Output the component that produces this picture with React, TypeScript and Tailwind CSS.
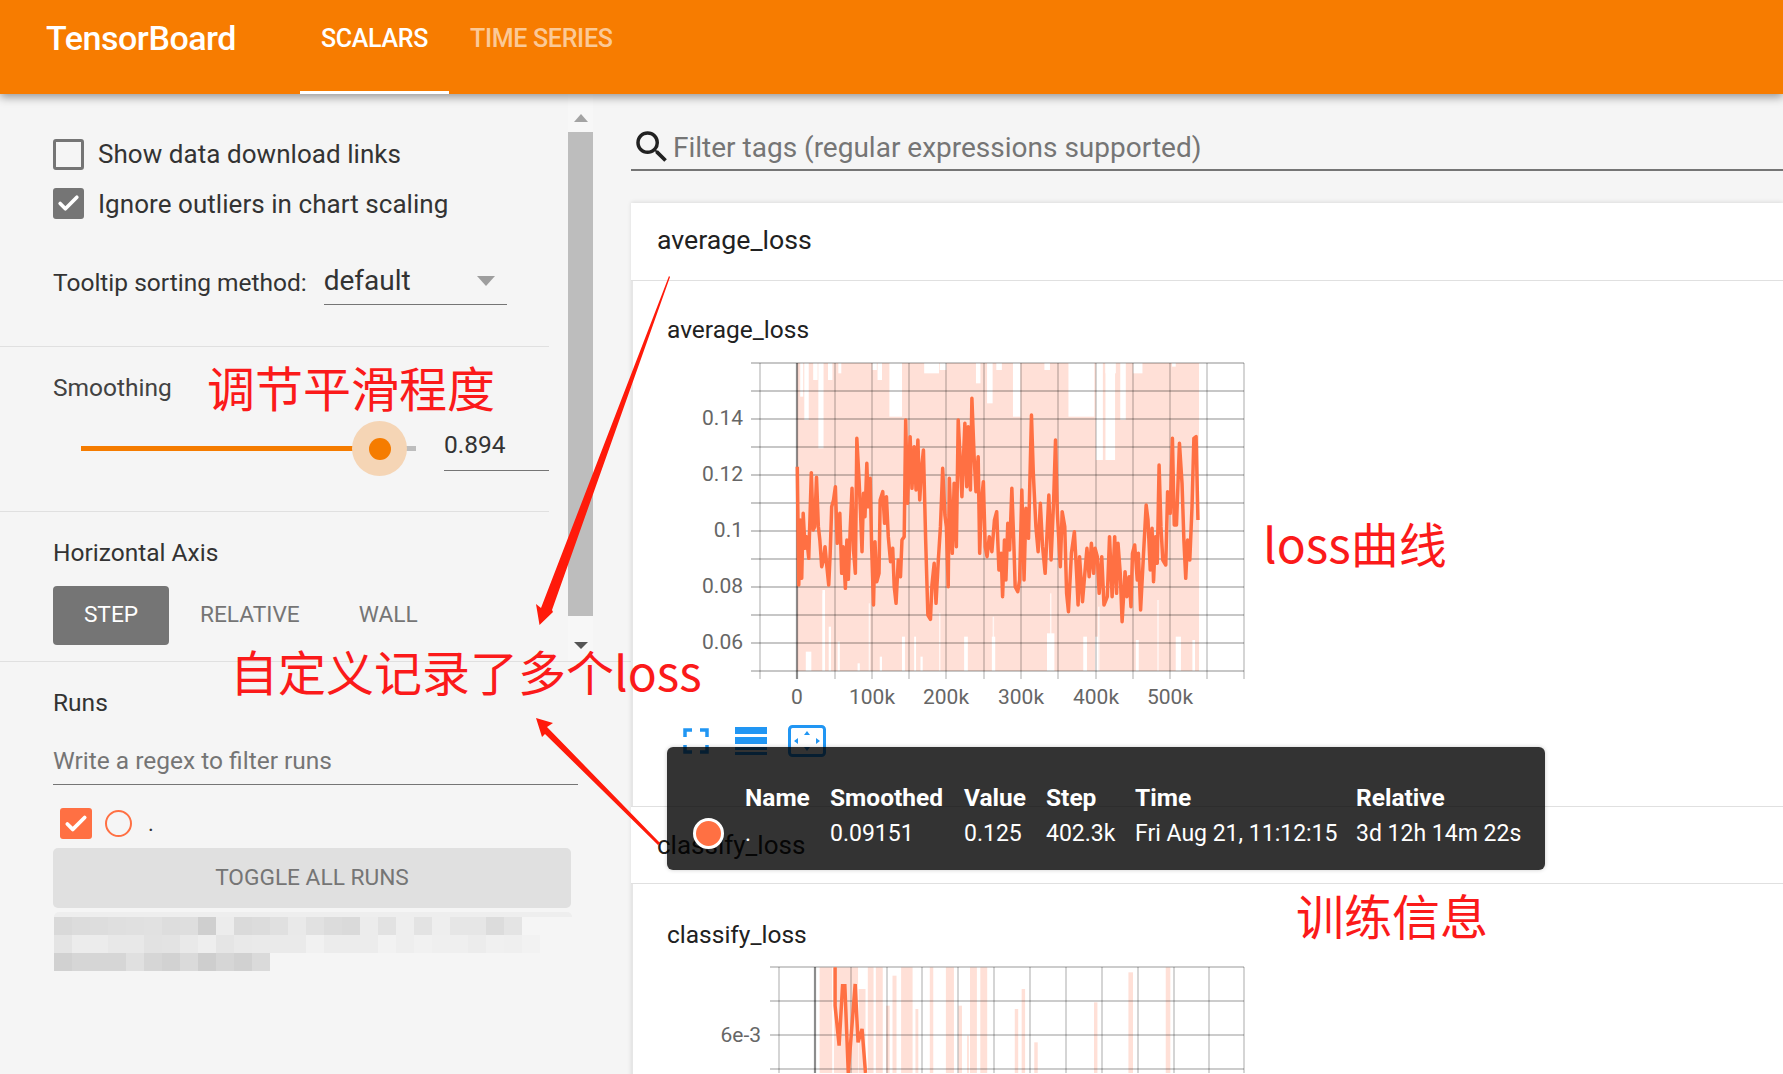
import { Check } from 'lucide-react'

const zx = (x: number) => 680 + x / 2.703
const zy = (y: number) => 340 + y / 3

const smoothed = [[317,380],[321,735],[325,540],[329,715],[333,520],[338,625],[342,590],[348,655],[355,398],[360,570],[364,560],[369,412],[374,560],[378,600],[383,680],[388,660],[392,620],[397,680],[402,735],[406,640],[410,500],[415,480],[420,440],[425,610],[432,520],[437,700],[441,620],[447,745],[451,600],[455,718],[460,570],[465,445],[469,630],[474,700],[478,295],[484,420],[488,520],[492,635],[496,460],[500,530],[505,370],[509,500],[514,415],[518,620],[523,795],[527,605],[532,725],[538,700],[541,480],[548,455],[553,550],[558,470],[563,590],[569,665],[575,625],[579,740],[584,790],[590,660],[596,710],[600,600],[606,590],[610,240],[615,490],[622,290],[627,445],[633,320],[638,450],[643,300],[648,480],[653,385],[658,330],[664,600],[670,825],[677,838],[681,735],[687,670],[692,790],[698,665],[704,560],[710,385],[716,525],[720,560],[725,740],[728,415],[736,640],[741,430],[747,620],[752,240],[757,350],[762,470],[770,250],[775,440],[779,260],[785,450],[789,175],[795,350],[800,455],[806,350],[810,640],[815,480],[820,425],[825,620],[830,650],[836,590],[843,635],[850,540],[856,515],[862,690],[868,640],[872,770],[877,600],[881,720],[886,550],[891,630],[897,445],[902,600],[906,740],[913,755],[918,720],[924,450],[930,720],[935,505],[942,595],[950,225],[955,400],[962,560],[968,635],[974,490],[980,620],[987,700],[997,465],[1003,660],[1010,480],[1015,300],[1020,520],[1028,680],[1033,515],[1040,560],[1045,760],[1050,815],[1058,640],[1066,575],[1072,700],[1076,795],[1080,650],[1088,785],[1095,690],[1100,625],[1106,710],[1112,610],[1118,700],[1122,625],[1128,650],[1133,760],[1140,650],[1146,795],[1155,770],[1161,590],[1168,770],[1175,590],[1180,760],[1184,610],[1190,700],[1195,845],[1203,695],[1208,770],[1214,710],[1219,800],[1223,640],[1229,615],[1236,720],[1239,640],[1245,810],[1253,640],[1260,495],[1265,540],[1271,690],[1276,565],[1280,725],[1285,590],[1290,670],[1295,375],[1300,560],[1305,660],[1313,675],[1318,455],[1325,520],[1331,295],[1336,555],[1342,555],[1350,310],[1357,430],[1362,600],[1367,715],[1372,600],[1378,660],[1384,500],[1389,295],[1395,290],[1400,540]]

// white gaps in the raw series band, zoomed coords [x1, x2, y]
const topGaps = [[325,333,170],[336,348,240],[360,372,120],[374,388,325],[400,412,120],[428,436,100],[520,532,90],[534,546,120],[566,600,230],[660,700,100],[702,720,90],[800,812,130],[830,845,190],[855,870,90],[900,920,230],[985,1000,90],[1050,1120,230],[1124,1143,360],[1150,1178,100],[1150,1176,360],[1190,1205,240],[1225,1250,100],[1330,1340,80]]
const bottomGaps = [[340,355,935],[385,392,750],[402,408,860],[426,432,905],[480,486,970],[540,546,950],[600,608,890],[633,638,890],[650,656,950],[768,778,890],[843,852,890],[992,1012,880],[1090,1100,890],[1122,1130,890],[1232,1240,900],[1340,1354,890],[1385,1392,900]]
const lightLines = [[385,760],[510,790],[700,820],[845,830],[1000,760],[1130,800],[1290,780]]

const chart1V = [760, 835, 872, 909, 946, 984, 1021, 1058, 1096, 1133, 1170, 1207, 1244]
const chart1H = [363, 391, 419, 447, 475, 503, 531, 559, 587, 615, 643, 671]
const chart1Y = [['0.14', 419], ['0.12', 475], ['0.1', 531], ['0.08', 587], ['0.06', 643]] as const
const chart1X = [['0', 797], ['100k', 872], ['200k', 946], ['300k', 1021], ['400k', 1096], ['500k', 1170]] as const

const chart2V = [779, 851, 887, 922, 958, 994, 1030, 1066, 1102, 1138, 1174, 1209, 1244]
const chart2Pink = [[278,300,775],[303,345,775],[346,358,840],[362,372,775],[376,388,775],[394,400,890],[405,412,800],[420,440,775],[445,450,900],[470,476,775],[498,512,775],[520,526,890],[535,538,980],[540,552,775],[558,570,775],[618,624,900],[630,636,840],[652,658,1000],[756,762,880],[816,824,790],[881,889,775]]
const chart2Line = [[305,775],[305,890],[312,1010],[318,830],[322,830],[328,1092],[340,825],[345,1000],[352,960],[358,1092]]

const blurRows = [
  ['#d9d9d9','#dcdcdc','#dddddd','#dfdfdf','#e0e0e0','#e1e1e1','#dddddd','#dedede','#cfcfcf','#ececec','#dadada','#dcdcdc','#e0e0e0','#e9e9e9','#e1e1e1','#dcdcdc','#dadada','#ececec','#e2e2e2','#eeeeee','#e3e3e3','#eeeeee','#e6e6e6','#e6e6e6','#dcdcdc','#e4e4e4'],
  ['#e4e4e4','#ececec','#ececec','#e8e8e8','#e8e8e8','#e2e2e2','#e3e3e3','#e9e9e9','#eeeeee','#e5e5e5','#e9e9e9','#eaeaea','#eaeaea','#eaeaea','#f1f1f1','#ececec','#ececec','#ececec','#f2f2f2','#eeeeee','#f1f1f1','#efefef','#efefef','#ececec','#f0f0f0','#efefef','#f2f2f2'],
  ['#d1d1d1','#d6d6d6','#d6d6d6','#d6d6d6','#e0e0e0','#d6d6d6','#d2d2d2','#dadada','#cecece','#d6d6d6','#d1d1d1','#dadada'],
]

function Chart1() {
  return (
    <svg className="block w-[550px] h-[365px]" viewBox="700 350 550 365">
      <rect x={zx(317)} y={363} width={zx(1403) - zx(317)} height={308} fill="#ffe0d7" />
      {topGaps.map(([a, b, y]) => (
        <rect key={`t${a}-${y}`} x={zx(a)} y={363} width={zx(b) - zx(a)} height={zy(y) - 363} fill="#fff" />
      ))}
      {bottomGaps.map(([a, b, y]) => (
        <rect key={`b${a}-${y}`} x={zx(a)} y={zy(y)} width={zx(b) - zx(a)} height={671 - zy(y)} fill="#fff" />
      ))}
      {lightLines.map(([x, y]) => (
        <rect key={`l${x}`} x={zx(x)} y={zy(y)} width={1.5} height={671 - zy(y)} fill="#fff" opacity={0.7} />
      ))}
      {chart1H.map((y) => (
        <line key={y} x1={751} x2={1244} y1={y} y2={y} stroke="#000" strokeOpacity={0.22} strokeWidth={2} />
      ))}
      {chart1V.map((x) => (
        <line key={x} x1={x} x2={x} y1={363} y2={679} stroke="#000" strokeOpacity={0.22} strokeWidth={1.5} />
      ))}
      <line x1={797} x2={797} y1={363} y2={679} stroke="#000" strokeOpacity={0.45} strokeWidth={2.2} />
      <polyline
        points={smoothed.map(([x, y]) => `${zx(x)},${zy(y)}`).join(' ')}
        fill="none"
        stroke="#ff7043"
        strokeWidth={3.5}
        strokeLinejoin="round"
      />
      {chart1Y.map(([t, y]) => (
        <text key={t} x={743} y={y + 6} textAnchor="end" fill="#666" fontSize="21">{t}</text>
      ))}
      {chart1X.map(([t, x]) => (
        <text key={t} x={x} y={704} textAnchor="middle" fill="#666" fontSize="21">{t}</text>
      ))}
    </svg>
  )
}

function Chart2() {
  const px = (x: number) => 660 + x / 1.742
  const py = (y: number) => 710 + y / 3
  return (
    <svg className="block w-[550px] h-[110px]" viewBox="700 964 550 110">
      {chart2Pink.map(([a, b, y]) => (
        <rect key={a} x={px(a)} y={py(y)} width={px(b) - px(a)} height={1074 - py(y)} fill="#ffe0d7" />
      ))}
      {[968, 1002, 1036, 1070].map((y) => (
        <line key={y} x1={770} x2={1244} y1={y} y2={y} stroke="#000" strokeOpacity={0.2} strokeWidth={2} />
      ))}
      {chart2V.map((x) => (
        <line key={x} x1={x} x2={x} y1={968} y2={1074} stroke="#000" strokeOpacity={0.22} strokeWidth={1.5} />
      ))}
      <line x1={815} x2={815} y1={968} y2={1074} stroke="#000" strokeOpacity={0.45} strokeWidth={2.2} />
      <polyline
        points={chart2Line.map(([x, y]) => `${px(x)},${py(y)}`).join(' ')}
        fill="none"
        stroke="#ff7043"
        strokeWidth={3.5}
      />
      <text x={761} y={1043} textAnchor="end" fill="#666" fontSize="21">6e-3</text>
    </svg>
  )
}

function ChartIcons() {
  return (
    <div className="flex items-center h-[34px] ml-[16px] mt-[9px]">
      <svg width="26" height="26" viewBox="0 0 26 26" fill="none" stroke="#2196f3" strokeWidth="3.5">
        <path d="M2 9V2h7M17 2h7v7M2 17v7h7M24 17v7h-7" />
      </svg>
      <svg className="ml-[26px]" width="32" height="28" viewBox="0 0 32 28" fill="#2196f3">
        <rect width="32" height="7" />
        <rect y="10" width="32" height="7" />
        <rect y="20" width="32" height="3" />
        <rect y="25" width="32" height="3" />
      </svg>
      <svg className="ml-[21px]" width="38" height="32" viewBox="0 0 38 32" fill="#2196f3">
        <rect x="1.5" y="1.5" width="35" height="29" rx="3" fill="none" stroke="#2196f3" strokeWidth="3" />
        <path d="M19 6l3 4h-6zM19 26l3-4h-6zM6 16l4-3v6zM32 16l-4-3v6z" />
      </svg>
    </div>
  )
}

function Tooltip() {
  return (
    <div className="absolute z-10 left-[36px] top-[653px] w-[878px] h-[123px] rounded-[6px] bg-black/80 shadow-[0_0_4px_rgba(0,0,0,0.2)] text-white text-[23px] leading-[28px] pt-[37px]">
      <div className="grid grid-cols-[78px_85px_134px_82px_89px_221px_1fr] items-center font-bold text-[24.5px]">
        <div />
        <div>Name</div>
        <div>Smoothed</div>
        <div>Value</div>
        <div>Step</div>
        <div>Time</div>
        <div>Relative</div>
      </div>
      <div className="grid grid-cols-[78px_85px_134px_82px_89px_221px_1fr] items-center mt-[6px]">
        <div className="pl-[26px]">
          <div className="w-[31px] h-[31px] rounded-full bg-[#ff7043] border-[3px] border-white" />
        </div>
        <div>.</div>
        <div>0.09151</div>
        <div>0.125</div>
        <div>402.3k</div>
        <div className="whitespace-nowrap">Fri Aug 21, 11:12:15</div>
        <div className="whitespace-nowrap">3d 12h 14m 22s</div>
      </div>
    </div>
  )
}

function Annotations() {
  return (
    <>
      <svg className="absolute inset-0 w-full h-full pointer-events-none" viewBox="0 0 1783 1074">
        <path d="M669 276L670 277L552 610L553 612L539.5 625L536 604L541 608Z" fill="#ff1a0a" />
        <path d="M536 718L553 723L547 727L660 843L658 845L545 734L542 737Z" fill="#ff1a0a" />
      </svg>
      <div className="absolute left-[207px] top-[362px] text-[48px] leading-[48px] text-[#fb1a1a] [font-family:'Noto_Sans_CJK_SC',sans-serif] whitespace-nowrap">调节平滑程度</div>
      <div className="absolute left-[230px] top-[646px] text-[48px] leading-[48px] text-[#fb1a1a] [font-family:'Noto_Sans_CJK_SC',sans-serif] whitespace-nowrap">自定义记录了多个loss</div>
      <div className="absolute left-[1263px] top-[518px] text-[48px] leading-[48px] text-[#fb1a1a] [font-family:'Noto_Sans_CJK_SC',sans-serif] whitespace-nowrap">loss曲线</div>
      <div className="absolute left-[1296px] top-[890px] text-[48px] leading-[48px] text-[#fb1a1a] [font-family:'Noto_Sans_CJK_SC',sans-serif] whitespace-nowrap">训练信息</div>
    </>
  )
}

function Sidebar() {
  return (
    <aside className="w-[631px] shrink-0 text-[#333]">
      <div className="flex h-[568px] border-b border-[#e0e0e0]">
        <div className="w-[549px] shrink-0">
          <div className="h-[253px] border-b border-[#e0e0e0] pl-[53px] pt-[45px]">
            <div className="flex items-center h-[31px]">
              <div className="w-[31px] h-[31px] rounded-[3px] border-[3px] border-[#757575]" />
              <span className="ml-[14px] mt-[-2px] text-[26px] leading-none tracking-[0.05px]">Show data download links</span>
            </div>
            <div className="flex items-center h-[31px] mt-[18px]">
              <div className="w-[31px] h-[31px] rounded-[3px] bg-[#757575] flex items-center justify-center">
                <Check size={25} color="#fff" strokeWidth={3.5} />
              </div>
              <span className="ml-[14px] text-[26px] leading-none tracking-[0.05px]">Ignore outliers in chart scaling</span>
            </div>
            <div className="flex items-start mt-[44px]">
              <span className="text-[24.5px] leading-[40px] whitespace-nowrap">Tooltip sorting method:</span>
              <div className="ml-[17px] w-[183px] h-[42px] border-b border-[#757575] flex items-start justify-between pr-[12px]">
                <span className="text-[28px] leading-[36px]">default</span>
                <div className="mt-[13px] w-0 h-0 border-x-[9px] border-x-transparent border-t-[10px] border-t-[#9e9e9e]" />
              </div>
            </div>
          </div>
          <div className="h-[165px] border-b border-[#e0e0e0] pl-[53px] pt-[26px]">
            <div className="text-[24.5px] leading-[30px] text-[#424242]">Smoothing</div>
            <div className="flex items-start">
              <div className="relative w-[335px] h-[5px] ml-[28px] mt-[43px] bg-[#bdbdbd]">
                <div className="h-full w-[299px] bg-[#f57c00]" />
                <div className="absolute left-[271px] top-[-25px] w-[55px] h-[55px] rounded-full bg-[#f5d5b5] flex items-center justify-center">
                  <div className="w-[22px] h-[22px] rounded-full bg-[#f57c00]" />
                </div>
              </div>
              <div className="ml-[28px] mt-[14px] pt-[6px] w-[105px] h-[54px] border-b border-[#757575] text-[24.5px] leading-[44px]">0.894</div>
            </div>
          </div>
          <div className="pl-[53px] pt-[26px]">
            <div className="text-[24.5px] leading-[30px]">Horizontal Axis</div>
            <div className="flex items-center mt-[18px] text-[22.7px] text-[#757575]">
              <div className="w-[116px] h-[59px] rounded-[4px] bg-[#757575] text-white flex items-center justify-center">STEP</div>
              <span className="ml-[31px]">RELATIVE</span>
              <span className="ml-[59px]">WALL</span>
            </div>
          </div>
        </div>
        <div className="ml-[19px] w-[25px] flex flex-col items-center bg-[#f7f7f7]">
          <div className="h-[38px] w-full flex justify-center pt-[20px]">
            <div className="w-0 h-0 border-x-[7px] border-x-transparent border-b-[8px] border-b-[#a3a3a3]" />
          </div>
          <div className="w-full h-[484px] bg-[#bdbdbd]" />
          <div className="mt-[26px] w-0 h-0 border-x-[7px] border-x-transparent border-t-[7px] border-t-[#555]" />
        </div>
      </div>
      <div className="pl-[53px] pt-[26px]">
        <div className="text-[24.5px] leading-[30px]">Runs</div>
        <div className="mt-[24px] w-[525px] h-[43px] border-b border-[#757575] text-[24.5px] leading-[38px] text-[#757575]">Write a regex to filter runs</div>
        <div className="flex items-center ml-[7px] mt-[23px]">
          <div className="w-[32px] h-[31px] rounded-[3px] bg-[#ff7043] flex items-center justify-center">
            <Check size={26} color="#fff" strokeWidth={3.5} />
          </div>
          <div className="ml-[13px] w-[27px] h-[27px] rounded-full border-2 border-[#ff7043]" />
          <span className="ml-[16px] text-[22px] leading-none">.</span>
        </div>
        <div className="mt-[9px] w-[518px] h-[60px] rounded-[5px] bg-[#e0e0e0] flex items-center justify-center text-[22.7px] text-[#757575]">TOGGLE ALL RUNS</div>
        <div className="mt-[4px] ml-[1px] w-[518px] h-[5px] rounded-t-full bg-[#eeeeee]" />
        <div className="ml-[1px]">
          {blurRows.map((row, i) => (
            <div key={i} className="flex">
              {row.map((c, j) => (
                <div key={j} className="w-[18px] h-[18px]" style={{ backgroundColor: c }} />
              ))}
            </div>
          ))}
        </div>
      </div>
    </aside>
  )
}

export default function App() {
  return (
    <div className="relative w-full h-[1074px] overflow-hidden flex flex-col bg-[#f5f5f5] [font-family:Roboto,sans-serif]">
      <header className="relative z-20 h-[94px] shrink-0 flex bg-[#f77c00] text-white shadow-[0_3px_9px_rgba(0,0,0,0.4)]">
        <div className="w-[300px] shrink-0 pl-[46px] pt-[18px] text-[34px] leading-[40px] font-medium tracking-[-0.45px]">TensorBoard</div>
        <div className="w-[149px] border-b-[3px] border-white text-center pt-[23px] text-[25px] leading-[32px] font-medium tracking-[-0.3px]">SCALARS</div>
        <div className="ml-[21px] pt-[23px] text-[25px] leading-[32px] font-medium tracking-[-0.3px] text-white/60">TIME SERIES</div>
      </header>
      <div className="flex flex-1 min-h-0">
        <Sidebar />
        <main className="relative flex-1 min-w-0">
          <div className="h-[77px] flex items-end border-b-2 border-[#757575]">
            <svg className="mb-[1px]" width="42" height="42" viewBox="0 0 24 24" fill="#212121">
              <path d="M15.5 14h-.79l-.28-.27A6.471 6.471 0 0 0 16 9.5 6.5 6.5 0 1 0 9.5 16c1.61 0 3.09-.59 4.23-1.57l.27.28v.79l5 4.99L20.49 19l-4.99-5zm-6 0C7.01 14 5 11.99 5 9.5S7.01 5 9.5 5 14 7.01 14 9.5 11.99 14 9.5 14z" />
            </svg>
            <span className="text-[28px] leading-[42px] text-[#757575]">Filter tags (regular expressions supported)</span>
          </div>
          <section className="mt-[32px] bg-white shadow-[0_-1px_4px_rgba(0,0,0,0.1)]">
            <div className="h-[78px] flex items-center pb-[2px] pl-[26px] border-b border-[#e0e0e0] text-[26.7px] text-[#212121]">average_loss</div>
            <div className="h-[525px] border-l-2 border-[#e6e6e6] pl-[34px] pt-[34px] text-[24.5px] leading-[30px] text-[#212121]">
              <div>average_loss</div>
              <div className="ml-[33px] mt-[5px]">
                <Chart1 />
              </div>
              <ChartIcons />
            </div>
            <div className="h-[78px] flex items-center pl-[26px] border-y border-[#e0e0e0] text-[26px] text-[#212121]">classify_loss</div>
            <div className="h-[220px] border-l-2 border-[#e6e6e6] pl-[34px] pt-[36px] text-[24.5px] leading-[30px] text-[#212121]">
              <div>classify_loss</div>
              <div className="ml-[33px] mt-[13px]">
                <Chart2 />
              </div>
            </div>
          </section>
          <Tooltip />
        </main>
      </div>
      <Annotations />
    </div>
  )
}
